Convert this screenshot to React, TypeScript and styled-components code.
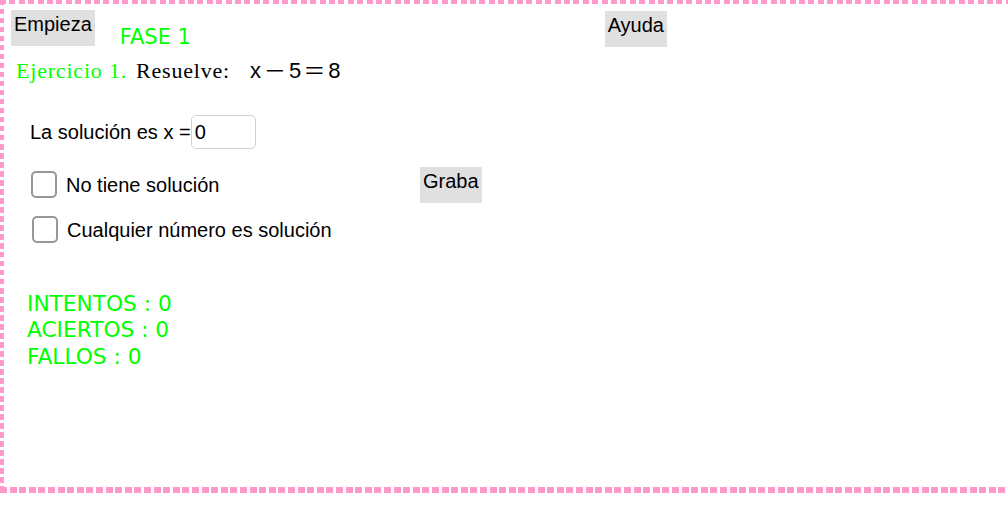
import React from "react";
import styled, { createGlobalStyle } from "styled-components";

const Global = createGlobalStyle`
  html, body {
    margin: 0;
    padding: 0;
    background: #ffffff;
    overflow: hidden;
  }
  body {
    font-family: "Liberation Sans", Arial, sans-serif;
  }
`;

const PINK = "#ff99cc";
const GREEN = "#00ff00";

const Frame = styled.div`
  box-sizing: border-box;
  width: 1008px;
  height: 493px;
  display: flex;
  flex-direction: column;
  background:
    repeating-linear-gradient(to right, ${PINK} 0 6px, transparent 6px 9.4px) left top / 100% 4px no-repeat,
    repeating-linear-gradient(to right, ${PINK} 0 7px, transparent 7px 9.6px) left bottom / 100% 6px no-repeat,
    repeating-linear-gradient(to bottom, ${PINK} 0 5.5px, transparent 5.5px 9px) left top / 4px 100% no-repeat,
    #ffffff;
`;

const TopBar = styled.div`
  display: flex;
  align-items: flex-start;
  width: 667px;
  margin-top: 10px;
`;

const Button = styled.button<{ $left?: number; $top?: number }>`
  appearance: none;
  border: none;
  border-radius: 0;
  background: #e0e0e0;
  color: #000000;
  font-family: "Liberation Sans", Arial, sans-serif;
  font-size: 20px;
  line-height: 20px;
  padding: 4px 3px 12px;
  margin: ${(p) => p.$top ?? 0}px 0 0 ${(p) => (p.$left === undefined ? "auto" : `${p.$left}px`)};
  cursor: pointer;
  white-space: nowrap;
`;

const Phase = styled.div`
  font-family: "DejaVu Sans", sans-serif;
  font-size: 21px;
  line-height: 21px;
  color: ${GREEN};
  margin: 17px 0 0 25px;
`;

const Exercise = styled.div`
  display: flex;
  align-items: baseline;
  margin: 11px 0 0 16px;
  font-family: "Liberation Serif", "Times New Roman", serif;
  font-size: 22px;
  line-height: 24px;
  letter-spacing: 0.8px;
`;

const Tinted = styled.span<{ $green?: boolean; $gap?: number }>`
  color: ${(p) => (p.$green ? GREEN : "#000000")};
  margin-left: ${(p) => p.$gap ?? 0}px;
  white-space: pre;
`;

const Formula = styled.span`
  display: inline-flex;
  align-items: baseline;
  margin-left: 20px;
  font-family: "Liberation Sans", Arial, sans-serif;
  font-size: 22px;
  letter-spacing: 0;
  color: #000000;
`;

const Sym = styled.span`
  display: inline-block;
`;

const Op = styled.span<{ $w: number }>`
  display: inline-block;
  width: ${(p) => p.$w}px;
  text-align: center;
  font-weight: 300;
  transform: scaleX(1.5);
`;

const AnswerRow = styled.div`
  display: flex;
  align-items: center;
  margin: 32px 0 0 30px;
  font-size: 20px;
  line-height: 20px;
  color: #000000;
`;

const Field = styled.input`
  box-sizing: border-box;
  width: 65px;
  height: 34px;
  margin: 0;
  padding: 0 0 0 3px;
  border: 1px solid #d2d2d2;
  border-radius: 5px;
  font-family: "Liberation Sans", Arial, sans-serif;
  font-size: 20px;
  color: #000000;
  outline: none;
  background: #ffffff;
`;

const CheckRow = styled.div<{ $top: number }>`
  display: flex;
  align-items: flex-start;
  margin-top: ${(p) => p.$top}px;
`;

const Option = styled.label<{ $left: number; $gap: number; $width?: number }>`
  display: flex;
  align-items: center;
  gap: ${(p) => p.$gap}px;
  margin-left: ${(p) => p.$left}px;
  margin-top: ${(p) => (p.$width ? 4 : 0)}px;
  width: ${(p) => (p.$width ? `${p.$width}px` : "auto")};
  font-size: 20px;
  line-height: 20px;
  color: #000000;
`;

const Box = styled.input`
  appearance: none;
  box-sizing: border-box;
  width: 26px;
  height: 27px;
  margin: 0;
  border: 2px solid #979797;
  border-radius: 5px;
  background: #ffffff;
`;

const Stats = styled.div`
  margin: 48px 0 0 27px;
  font-family: "DejaVu Sans", sans-serif;
  font-size: 21.7px;
  line-height: 26.4px;
  color: ${GREEN};
`;

export default function App() {
  return (
    <>
      <Global />
      <Frame>
        <TopBar>
          <Button $left={11}>Empieza</Button>
          <Phase>FASE 1</Phase>
          <Button $top={1}>Ayuda</Button>
        </TopBar>
        <Exercise>
          <Tinted $green>Ejercicio 1.</Tinted>
          <Tinted $gap={9}>Resuelve:</Tinted>
          <Formula>
            <Sym>x</Sym>
            <Op $w={28}>−</Op>
            <Sym>5</Sym>
            <Op $w={27}>=</Op>
            <Sym>8</Sym>
          </Formula>
        </Exercise>
        <AnswerRow>
          <span>La solución es x =</span>
          <Field defaultValue="0" />
        </AnswerRow>
        <CheckRow $top={18}>
          <Option $left={31} $gap={9} $width={389}>
            <Box type="checkbox" />
            <span>No tiene solución</span>
          </Option>
          <Button $left={0}>Graba</Button>
        </CheckRow>
        <CheckRow $top={13}>
          <Option $left={32} $gap={9}>
            <Box type="checkbox" />
            <span>Cualquier número es solución</span>
          </Option>
        </CheckRow>
        <Stats>
          <div>INTENTOS : 0</div>
          <div>ACIERTOS : 0</div>
          <div>FALLOS : 0</div>
        </Stats>
      </Frame>
    </>
  );
}
